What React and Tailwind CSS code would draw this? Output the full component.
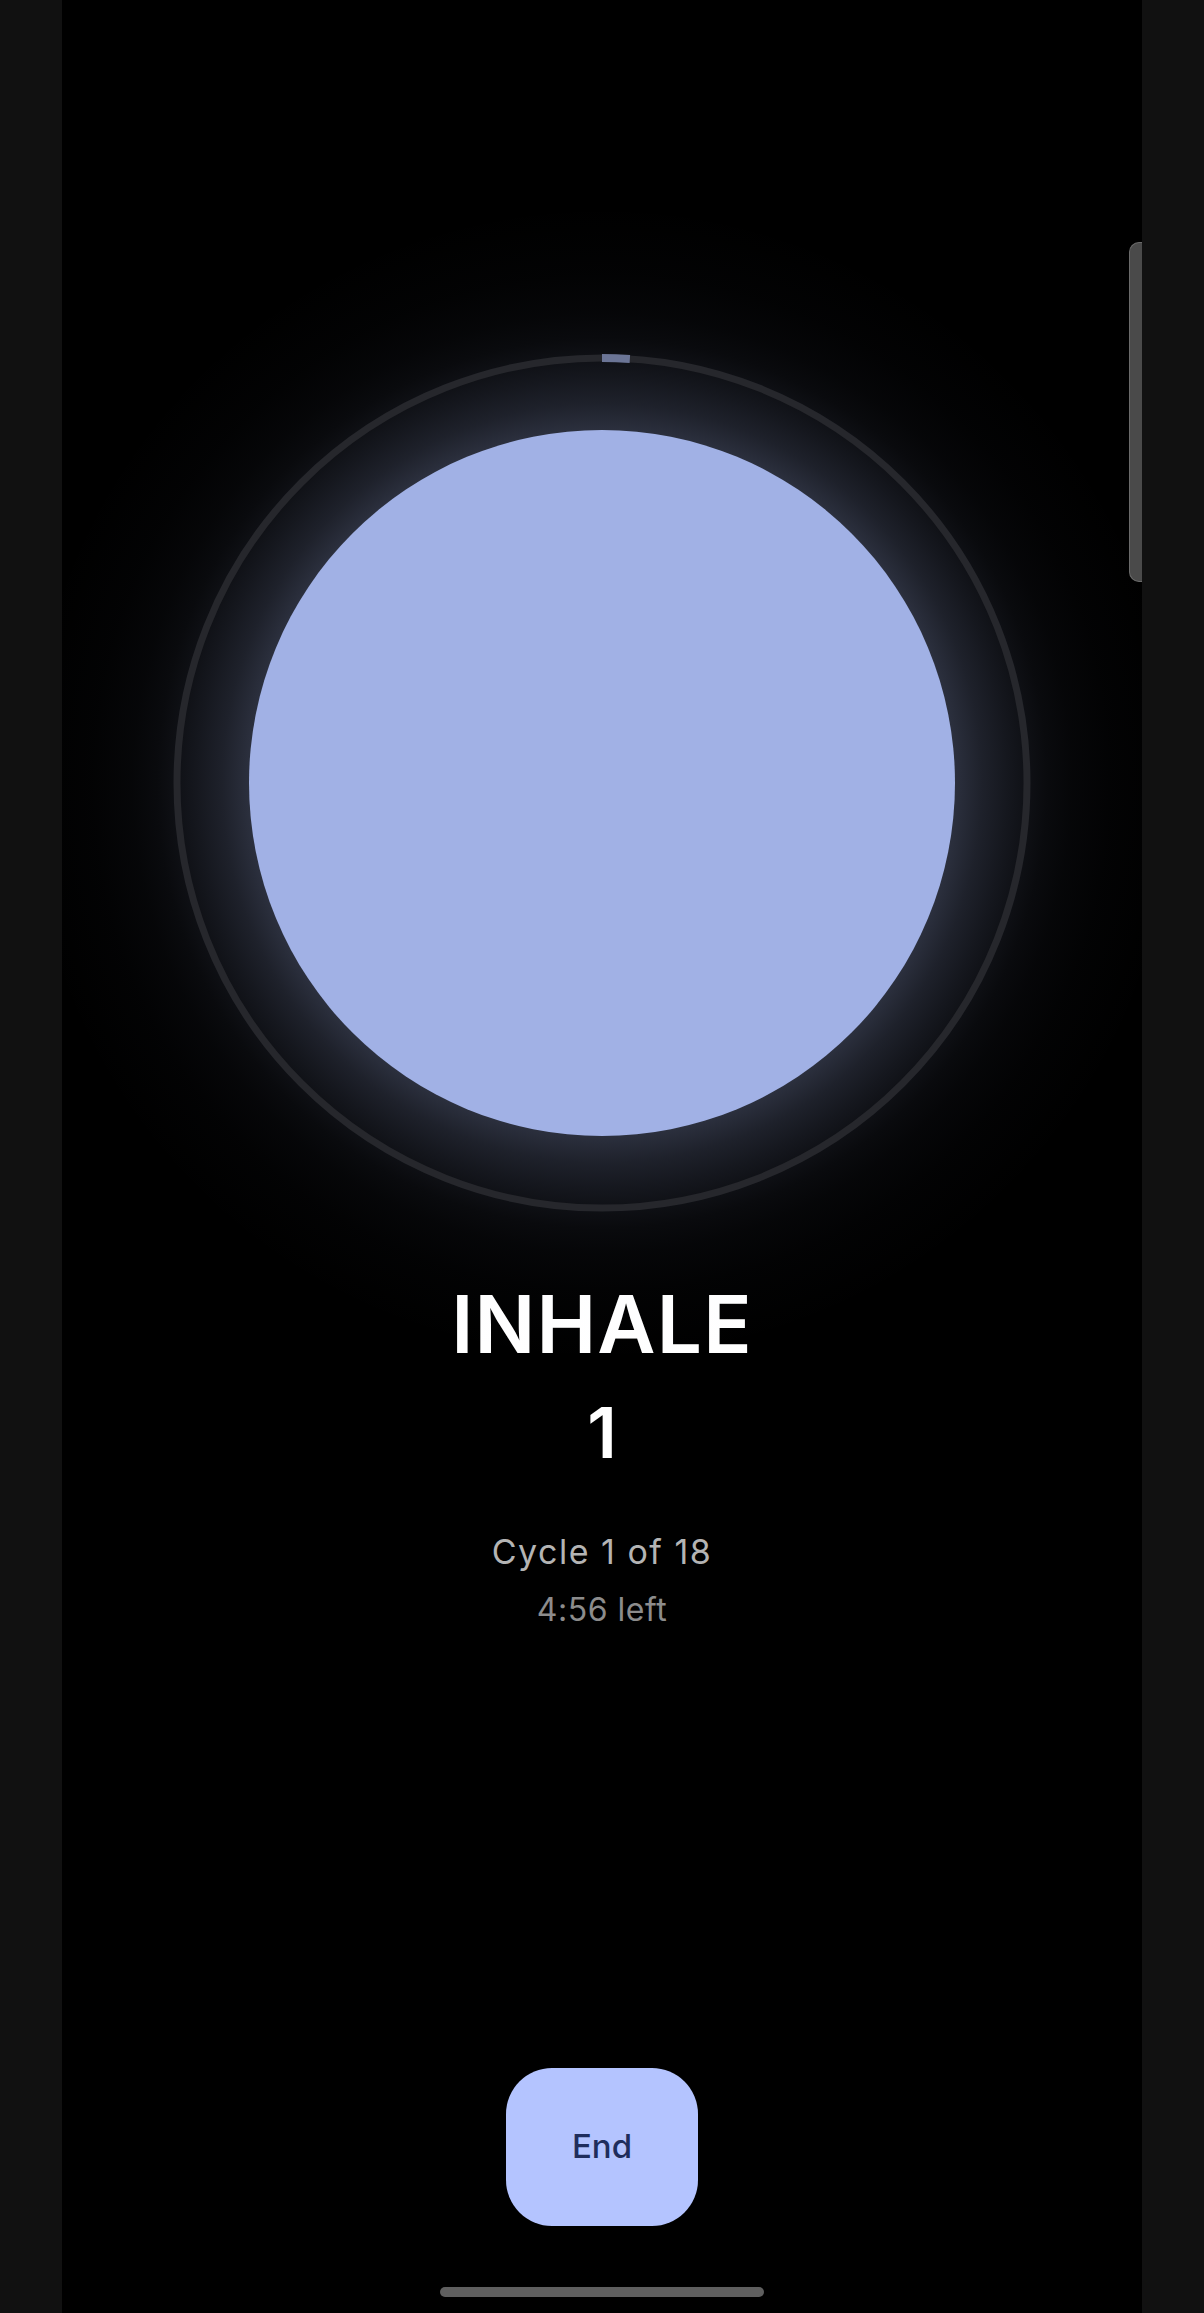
import React from "react";

export default function App() {
  const r = 425;
  const c = 2 * Math.PI * r;
  const prog = 28;
  return (
    <div className="flex min-h-[2313px] w-full bg-[#111111]" style={{ fontFamily: "Inter, 'Noto Sans', sans-serif" }}>
      <div className="w-[62px] shrink-0" />
      <div className="relative flex w-[1080px] shrink-0 flex-col items-center overflow-hidden bg-black">
        {/* side handle */}
        <div className="absolute right-0 top-[242px] h-[340px] w-[13px] rounded-l-[10px] border border-r-0 border-[#6a6a6a] bg-[#4a4a4a]" />

        <div className="relative mt-[353px] h-[860px] w-[860px] shrink-0">
          <div className="absolute left-[-170px] top-[-170px] h-[1200px] w-[1200px] bg-[radial-gradient(circle,rgba(160,176,228,0.27)_353px,rgba(160,176,228,0.19)_380px,rgba(160,176,228,0.135)_405px,rgba(160,176,228,0.095)_425px,rgba(160,176,228,0.06)_445px,rgba(160,176,228,0.035)_470px,rgba(160,176,228,0.015)_510px,rgba(160,176,228,0)_580px)]" />
          <div className="absolute left-[77px] top-[77px] h-[706px] w-[706px] rounded-full bg-[#a1b1e5]" />
          <svg className="absolute inset-0" width="860" height="860" viewBox="0 0 860 860">
            <circle cx="430" cy="430" r={r} fill="none" stroke="#26272c" strokeWidth="7" />
            <circle
              cx="430"
              cy="430"
              r={r}
              fill="none"
              stroke="#6b7596"
              strokeWidth="8"
              strokeDasharray={`${prog} ${c}`}
              transform="rotate(-90 430 430)"
            />
          </svg>
        </div>

        <div className="mt-[71px] text-[80px] font-semibold leading-none tracking-[0.015em] text-white">INHALE</div>
        <div className="mt-[34px] text-[70px] font-semibold leading-none text-white">1</div>
        <div className="mt-[67px] text-[34px] leading-none tracking-[1.5px] text-[#b4b4b4]">Cycle 1 of 18</div>
        <div className="mt-[25px] text-[32px] leading-none tracking-[0.5px] text-[#8c8c8c]">4:56 left</div>

        <button className="mt-[442px] flex h-[158px] w-[192px] items-center justify-center rounded-[46px] bg-[#b4c4ff] text-[33px] font-medium text-[#1f2d5c]">
          End
        </button>

        <div className="mt-[61px] h-[10px] w-[324px] rounded-full bg-[#5f5f5f]" />
      </div>
      <div className="w-[62px] shrink-0" />
    </div>
  );
}
